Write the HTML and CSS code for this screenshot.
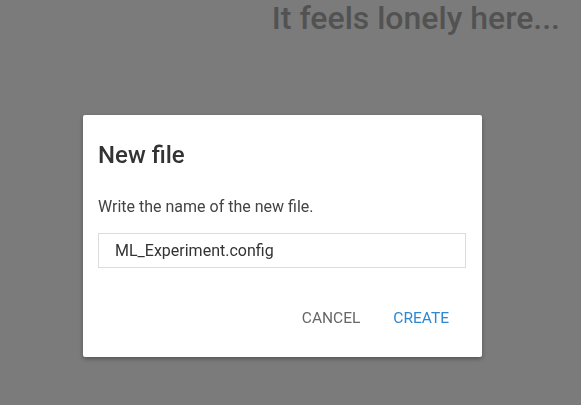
FILE: index.html
```html
<!DOCTYPE html>
<html>
<head>
<meta charset="utf-8">
<link rel="stylesheet" href="styles.css">
</head>
<body>
<header class="page-header">
  <h1 class="empty-title">It feels lonely here...</h1>
</header>
<div class="overlay">
  <div class="dialog">
    <h2 class="dialog-title">New file</h2>
    <p class="dialog-text">Write the name of the new file.</p>
    <div class="field">ML_Experiment.config</div>
    <div class="actions">
      <button class="btn btn-cancel">Cancel</button>
      <button class="btn btn-create">Create</button>
    </div>
  </div>
</div>
</body>
</html>
```
FILE: styles.css
```css
html, body {
  margin: 0;
  padding: 0;
  height: 100%;
}
body {
  background: #7b7b7b;
  font-family: Roboto, "Liberation Sans", sans-serif;
  overflow: hidden;
}
.page-header {
  display: flex;
  justify-content: flex-end;
  padding: 0 21px 0 0;
}
.empty-title {
  margin: 0;
  font-size: 32px;
  font-weight: 500;
  line-height: 36px;
  color: #525252;
}
.overlay {
  position: fixed;
  left: 83px;
  top: 115px;
}
.dialog {
  width: 399px;
  height: 242px;
  box-sizing: border-box;
  background: #fff;
  border-radius: 2px;
  box-shadow: 0 2px 4px rgba(0,0,0,0.3);
  padding: 25px 16px 0 15px;
  display: flex;
  flex-direction: column;
}
.dialog-title {
  margin: 0;
  font-size: 24px;
  font-weight: 500;
  line-height: 30px;
  color: #333;
}
.dialog-text {
  margin: 27px 0 0;
  font-size: 16px;
  line-height: 20px;
  color: #444;
}
.field {
  margin-top: 16px;
  height: 35px;
  box-sizing: border-box;
  border: 1px solid #dcdcdc;
  padding: 0 16px;
  font-size: 16px;
  line-height: 33px;
  color: #333;
}
.actions {
  display: flex;
  justify-content: flex-end;
  gap: 33px;
  margin-top: 40px;
  padding-right: 17px;
}
.btn {
  background: none;
  border: 0;
  padding: 0;
  font-family: inherit;
  font-size: 15.5px;
  text-transform: uppercase;
  line-height: 20px;
}
.btn-cancel { color: #666; }
.btn-create { color: #2e87d1; }
```
